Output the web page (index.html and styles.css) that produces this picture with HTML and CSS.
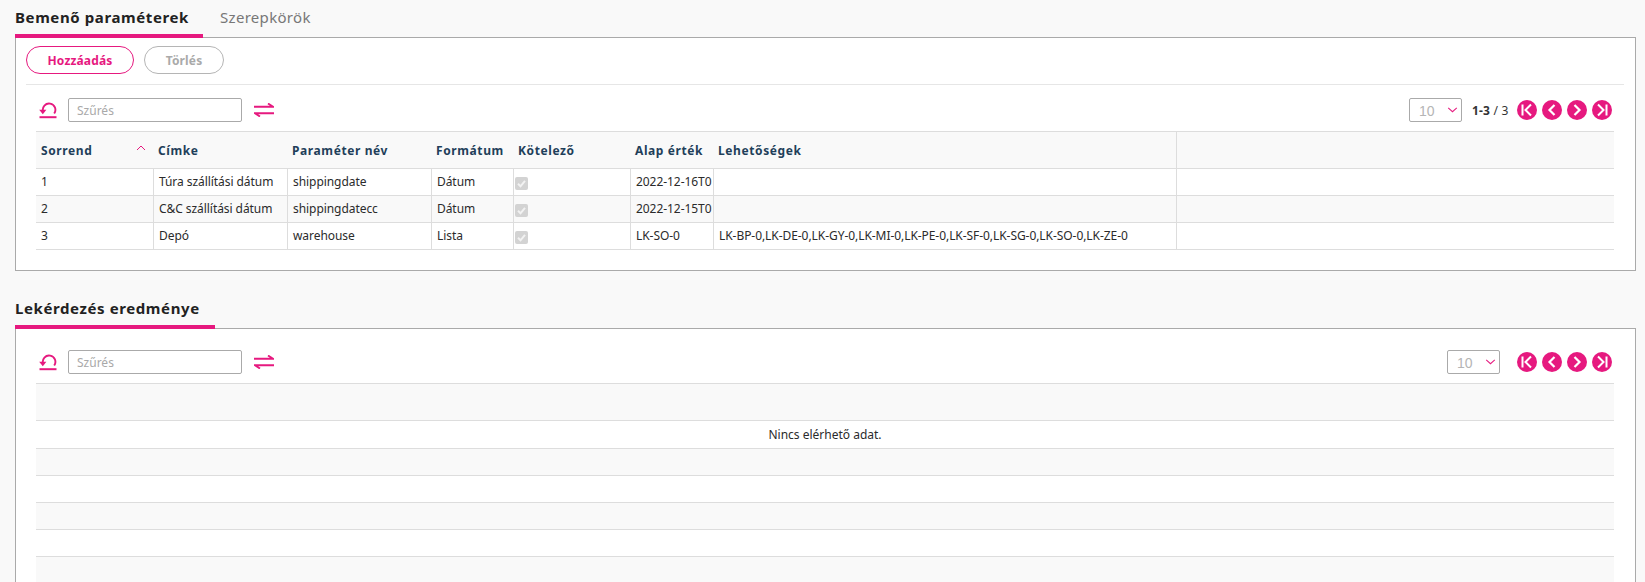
FILE: index.html
```html
<!DOCTYPE html>
<html lang="hu">
<head>
<meta charset="utf-8">
<title>Paraméterek</title>
<link rel="stylesheet" href="styles.css">
</head>
<body>
<svg class="defs" width="0" height="0" aria-hidden="true">
  <symbol id="i-reset" viewBox="0 0 18 17"><path d="M4 9.500A6.300 6.300 0 1 1 15.200 11.500" fill="none" stroke="currentColor" stroke-width="1.900"/><path d="M0.200 7.800h7.200l-3.600 4.400z" fill="currentColor"/><path d="M0.500 15.200h17" stroke="currentColor" stroke-width="2"/></symbol>
  <symbol id="i-swap" viewBox="0 0 20 14"><path d="M0 3.800h19.200L14 0.500M20 10.200H0.800L6 13.500" fill="none" stroke="currentColor" stroke-width="1.900"/></symbol>
  <symbol id="i-first" viewBox="0 0 20 20"><circle cx="10" cy="10" r="10" fill="currentColor"/><path d="M5.500 4.500v11M14 4.500 8.500 10l5.500 5.500" fill="none" stroke="#fff" stroke-width="2"/></symbol>
  <symbol id="i-prev" viewBox="0 0 20 20"><circle cx="10" cy="10" r="10" fill="currentColor"/><path d="M12.500 5 7.500 10l5 5" fill="none" stroke="#fff" stroke-width="2.200"/></symbol>
  <symbol id="i-next" viewBox="0 0 20 20"><circle cx="10" cy="10" r="10" fill="currentColor"/><path d="M7.500 5l5 5-5 5" fill="none" stroke="#fff" stroke-width="2.200"/></symbol>
  <symbol id="i-last" viewBox="0 0 20 20"><circle cx="10" cy="10" r="10" fill="currentColor"/><path d="M14.500 4.500v11M6 4.500 11.500 10 6 15.500" fill="none" stroke="#fff" stroke-width="2"/></symbol>
  <symbol id="i-down" viewBox="0 0 12 7"><path d="M1 1l5 4.500L11 1" fill="none" stroke="currentColor" stroke-width="1.200"/></symbol>
  <symbol id="i-up" viewBox="0 0 10 6"><path d="M1 5l4-4 4 4" fill="none" stroke="currentColor" stroke-width="1"/></symbol>
  <symbol id="i-check" viewBox="0 0 13 13"><rect width="13" height="13" rx="2" fill="#d3d3d3"/><path d="M3 6.800l2.500 2.500L10 3.800" fill="none" stroke="#f2f2f2" stroke-width="2"/></symbol>
</svg>

<div class="tabs">
  <div class="tab tab-active tab-first">Bemenő paraméterek</div>
  <div class="tab tab-muted">Szerepkörök</div>
</div>
<section class="panel panel-top">
  <div class="actions">
    <button class="btn btn-primary" type="button">Hozzáadás</button>
    <button class="btn btn-disabled" type="button">Törlés</button>
  </div>
  <div class="toolbar">
    <svg class="ico-reset"><use href="#i-reset"/></svg>
    <input class="filter" type="text" placeholder="Szűrés">
    <svg class="ico-swap"><use href="#i-swap"/></svg>
    <div class="pager">
      <div class="size"><span>10</span><svg class="ico-down"><use href="#i-down"/></svg></div>
      <div class="count"><b>1-3</b> / 3</div>
      <div class="pgbtns">
        <svg class="pg"><use href="#i-first"/></svg><svg class="pg"><use href="#i-prev"/></svg><svg class="pg"><use href="#i-next"/></svg><svg class="pg"><use href="#i-last"/></svg>
      </div>
    </div>
  </div>
  <table class="grid">
    <colgroup><col class="c1"><col class="c2"><col class="c3"><col class="c4"><col class="c5"><col class="c6"><col class="c7"><col></colgroup>
    <thead>
      <tr>
        <th class="sorted">Sorrend<svg class="ico-up"><use href="#i-up"/></svg></th><th>Címke</th><th>Paraméter név</th><th>Formátum</th><th>Kötelező</th><th>Alap érték</th><th class="edge">Lehetőségek</th><th></th>
      </tr>
    </thead>
    <tbody>
      <tr><td>1</td><td>Túra szállítási dátum</td><td>shippingdate</td><td>Dátum</td><td class="chk-cell"><svg class="chk"><use href="#i-check"/></svg></td><td>2022-12-16T0</td><td></td><td></td></tr>
      <tr class="alt"><td>2</td><td>C&amp;C szállítási dátum</td><td>shippingdatecc</td><td>Dátum</td><td class="chk-cell"><svg class="chk"><use href="#i-check"/></svg></td><td>2022-12-15T0</td><td></td><td></td></tr>
      <tr><td>3</td><td>Depó</td><td>warehouse</td><td>Lista</td><td class="chk-cell"><svg class="chk"><use href="#i-check"/></svg></td><td>LK-SO-0</td><td>LK-BP-0,LK-DE-0,LK-GY-0,LK-MI-0,LK-PE-0,LK-SF-0,LK-SG-0,LK-SO-0,LK-ZE-0</td><td></td></tr>
    </tbody>
  </table>
</section>

<div class="tabs tabs-second">
  <div class="tab tab-active tab-result">Lekérdezés eredménye</div>
</div>
<section class="panel panel-bottom">
  <div class="toolbar toolbar-second">
    <svg class="ico-reset"><use href="#i-reset"/></svg>
    <input class="filter" type="text" placeholder="Szűrés">
    <svg class="ico-swap"><use href="#i-swap"/></svg>
    <div class="pager">
      <div class="size"><span>10</span><svg class="ico-down"><use href="#i-down"/></svg></div>
      <div class="pgbtns pgbtns-wide">
        <svg class="pg"><use href="#i-first"/></svg><svg class="pg"><use href="#i-prev"/></svg><svg class="pg"><use href="#i-next"/></svg><svg class="pg"><use href="#i-last"/></svg>
      </div>
    </div>
  </div>
  <div class="empty">
    <div class="empty-head"></div>
    <div class="empty-row empty-first">Nincs elérhető adat.</div>
    <div class="empty-row alt"></div>
    <div class="empty-row"></div>
    <div class="empty-row alt"></div>
    <div class="empty-row"></div>
    <div class="empty-row alt"></div>
  </div>
</section>
</body>
</html>
```
FILE: styles.css
```css
* { box-sizing: border-box; }
html, body { margin: 0; height: 582px; overflow: hidden; }
body {
  background: #f9f9f9;
  color: #2b2b2b;
  font-family: "Noto Sans", "Open Sans", sans-serif;
  font-size: 12px;
}
.defs { position: absolute; }

.tabs { display: flex; height: 38px; padding-left: 15px; }
.tabs-second { height: 39px; margin-top: 19px; }
.tab {
  display: flex; align-items: center;
  height: 100%;
  border-bottom: 4px solid transparent;
  font-size: 15px;
  line-height: 20px;
}
.tab-active { border-bottom-color: #e6197f; font-weight: 700; color: #222; letter-spacing: .6px; position: relative; z-index: 1; }
.tab-first { width: 188px; }
.tab-result { width: 200px; }
.tab-muted { margin-left: 17px; color: #777; letter-spacing: .3px; }

.panel { background: #fff; border: 1px solid #aaa; width: 1621px; margin: -1px 0 0 15px; padding: 0 10px; }
.panel-top { height: 234px; padding-top: 8px; }
.panel-bottom { height: 254px; padding-top: 21px; overflow: hidden; border-bottom: 0; }

.actions { display: flex; gap: 10px; height: 39px; border-bottom: 1px solid #e6e6e6; margin-right: 1px; }
.btn {
  height: 28px; border-radius: 14px; background: #fff;
  font-family: inherit; font-size: 12px; font-weight: 700; padding: 0; letter-spacing: .15px;
}
.btn-primary { width: 108px; border: 1px solid #e6197f; color: #e6197f; }
.btn-disabled { width: 80px; border: 1px solid #b5b5b5; color: #aaa; }

.toolbar { display: flex; align-items: center; height: 24px; margin: 13px 13px 9px 10px; width: 1576px; }
.toolbar-second { margin-top: 0; }
.ico-reset { width: 18px; height: 17px; color: #e6197f; margin: 0 11px 0 3px; flex: none; }
.filter {
  width: 174px; height: 24px; border: 1px solid #aaa; border-radius: 2px; background: #fff;
  padding: 0 8px; font-family: inherit; font-size: 12px; color: #333; margin: 0;
}
.filter::placeholder { color: #a9a9a9; opacity: 1; }
.ico-swap { width: 20px; height: 14px; color: #e6197f; margin-left: 12px; flex: none; }

.pager { margin-left: auto; display: flex; align-items: center; }
.size {
  position: relative; width: 53px; height: 24px; border: 1px solid #aaa; border-radius: 2px; background: #fff;
  font-family: "Liberation Sans", sans-serif; font-size: 14px; color: #b5b5b5;
  padding-left: 9px; line-height: 24px;
}
.ico-down { position: absolute; right: 3px; top: 8px; width: 11px; height: 6px; color: #e6197f; }
.count { margin-left: 10px; width: 45px; color: #333; white-space: nowrap; font-size: 12px; letter-spacing: .2px; }
.count b { font-weight: 700; }
.pgbtns { display: flex; gap: 5px; }
.pgbtns-wide { margin-left: 17px; }
.pg { width: 20px; height: 20px; color: #e6197f; display: block; }

.grid { table-layout: fixed; border-collapse: collapse; width: 1578px; margin-left: 10px; }
.c1 { width: 117px; } .c2 { width: 134px; } .c3 { width: 144px; } .c4 { width: 82px; }
.c5 { width: 117px; } .c6 { width: 83px; } .c7 { width: 463px; }
.grid th {
  height: 37px; background: #f9f9f9; text-align: left; padding: 0 5px;
  color: #1f3f5a; font-size: 12px; font-weight: 700; letter-spacing: .6px;
  border-top: 1px solid #ddd; border-bottom: 1px solid #ddd; white-space: nowrap;
}
.grid th.edge { border-right: 1px solid #ddd; }
.grid th.sorted { position: relative; }
.ico-up { position: absolute; right: 7px; top: 13px; width: 10px; height: 6px; color: #e6197f; }
.grid td {
  height: 27px; padding: 0 5.5px 2px; border-bottom: 1px solid #ddd; border-right: 1px solid #ddd;
  font-size: 12px; letter-spacing: -.06px; color: #2b2b2b; white-space: nowrap; overflow: hidden;
}
.grid td:last-child { border-right: 0; }
.grid td:first-child { padding-left: 5px; }
.grid td.chk-cell { padding: 2px 0 0 1px; }
.grid .alt td { background: #f9f9f9; }
.chk { width: 13px; height: 13px; display: block; }

.empty { width: 1578px; margin-left: 10px; }
.empty-head { height: 38px; background: #f9f9f9; border-top: 1px solid #ddd; border-bottom: 1px solid #ddd; }
.empty-row { height: 27px; border-bottom: 1px solid #ddd; text-align: center; line-height: 26px; font-size: 12px; color: #2b2b2b; }
.empty-first { height: 28px; line-height: 27px; }
.empty-row.alt { background: #f9f9f9; }
```
